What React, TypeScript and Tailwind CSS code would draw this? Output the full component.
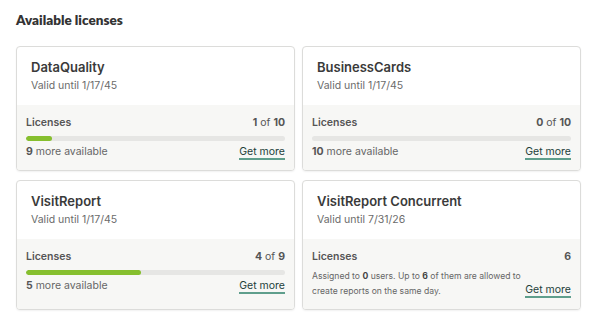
import React from "react";

type Lic = {
  name: string;
  valid: string;
  used?: number;
  total: number;
  concurrent?: boolean;
};

const items: Lic[] = [
  { name: "DataQuality", valid: "Valid until 1/17/45", used: 1, total: 10 },
  { name: "BusinessCards", valid: "Valid until 1/17/45", used: 0, total: 10 },
  { name: "VisitReport", valid: "Valid until 1/17/45", used: 4, total: 9 },
  { name: "VisitReport Concurrent", valid: "Valid until 7/31/26", total: 6, concurrent: true },
];

function GetMore() {
  return (
    <a className="shrink-0 whitespace-nowrap text-[10.5px] leading-[13px] text-[#23403a] border-b-2 border-[#5f9e8c] cursor-pointer">
      Get more
    </a>
  );
}

function Card({ l }: { l: Lic }) {
  return (
    <div className="flex flex-col rounded-[4px] border border-[#dcdcda] bg-white overflow-hidden shadow-[0_1px_2px_rgba(0,0,0,0.06)]">
      <div className="px-[14px] pt-[10px] pb-[11px]">
        <div className="text-[13px] leading-[20px] font-semibold text-[#3a3a3a]">{l.name}</div>
        <div className="mt-[1px] text-[10.5px] leading-[16px] text-[#6b6b6b]">{l.valid}</div>
      </div>
      <div className="flex-1 bg-[#f7f7f5] px-[9px] pt-[10px] pb-[10px]">
        <div className="flex justify-between text-[10.5px] leading-[16px] text-[#555]">
          <span className="font-semibold">Licenses</span>
          {l.concurrent ? (
            <span className="font-bold">{l.total}</span>
          ) : (
            <span>
              <b className="font-bold">{l.used}</b> of <b className="font-bold">{l.total}</b>
            </span>
          )}
        </div>
        {l.concurrent ? (
          <div className="mt-[4px] flex items-end justify-between">
            <p className="w-[210px] text-[8.6px] leading-[15px] text-[#666]">
              Assigned to <b className="font-bold text-[#444]">0</b> users. Up to{" "}
              <b className="font-bold text-[#444]">6</b> of them are allowed to create reports on the same day.
            </p>
            <div className="mb-[1px] flex">
              <GetMore />
            </div>
          </div>
        ) : (
          <>
            <div className="mt-[5px] h-[5px] rounded-full bg-[#e6e6e4] overflow-hidden">
              <div
                className="h-full rounded-full bg-[#86bf2e]"
                style={{ width: `${((l.used ?? 0) / l.total) * 100}%` }}
              />
            </div>
            <div className="mt-[3px] flex items-center justify-between text-[10.5px] leading-[16px] text-[#666]">
              <span>
                <b className="font-bold text-[#555]">{l.total - (l.used ?? 0)}</b> more available
              </span>
              <GetMore />
            </div>
          </>
        )}
      </div>
    </div>
  );
}

export default function App() {
  return (
    <div
      className="w-[598px] h-[322px] bg-white px-[16px] pt-[12px]"
      style={{ fontFamily: "Inter, 'Open Sans', sans-serif" }}
    >
      <h2
        className="text-[13.5px] leading-[17px] font-extrabold text-[#333]"
        style={{ fontFamily: "Lato, Inter, sans-serif" }}
      >
        Available licenses
      </h2>
      <div className="mt-[17px] grid w-[565px] grid-cols-2 gap-x-[7px] gap-y-[9px]">
        {items.map((l) => (
          <Card key={l.name} l={l} />
        ))}
      </div>
    </div>
  );
}
